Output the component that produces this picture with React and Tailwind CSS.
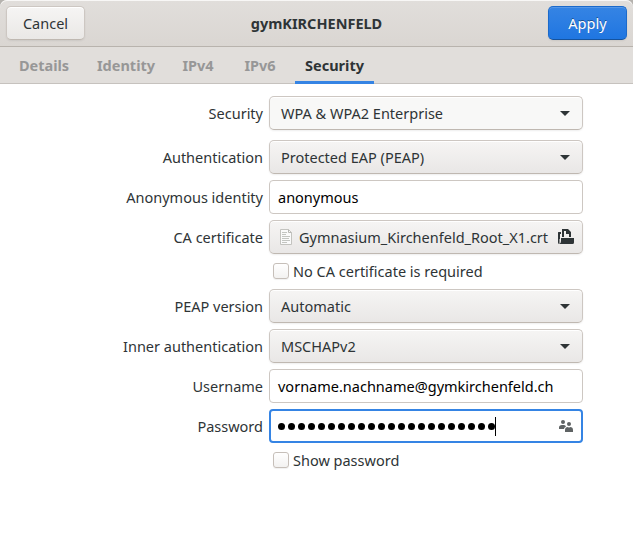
import React from 'react';

const raised =
  'border border-[#cdc7c2] border-b-[#bfb8b1] rounded-[5px] shadow-[inset_0_1px_#ffffff,0_1px_2px_rgba(0,0,0,0.07)]';

function Row({ label, labelClass = '', className = '', children }) {
  return (
    <div className={`flex h-[34px] items-center ${className}`}>
      <div className="w-[263px] shrink-0 text-right">
        <span className={labelClass}>{label}</span>
      </div>
      <div className="ml-[6px] h-[34px] w-[314px]">{children}</div>
    </div>
  );
}

function Combo({ text, flat, textClass = '' }) {
  return (
    <div
      className={`flex h-full items-center justify-between pl-[11px] pr-[12px] ${raised} ${
        flat ? 'bg-[#f8f8f7]' : 'bg-linear-to-b from-[#f6f5f4] to-[#e9e7e6]'
      }`}
    >
      <span className={textClass}>{text}</span>
      <svg width="10" height="5" viewBox="0 0 10 5" className="mt-px">
        <path d="M0 0h10L5 5z" fill="#2e3436" />
      </svg>
    </div>
  );
}

function Check({ label, className = '', textClass = '' }) {
  return (
    <div className={`flex h-[16px] items-center pl-[273px] ${className}`}>
      <span className="h-[16px] w-[16px] rounded-[3px] border border-[#c6bfb9] bg-linear-to-b from-white to-[#f3f2f1] shadow-[0_1px_1px_rgba(0,0,0,0.06)]" />
      <span className={`ml-[4px] ${textClass}`}>{label}</span>
    </div>
  );
}

function Tab({ label, active, className = '', textClass = '' }) {
  return (
    <div
      className={`flex h-[37px] items-center justify-center pb-px ${
        active ? 'border-b-[3px] border-[#3584e4] pt-[2px] text-[#2e3436]' : 'text-[#979797]'
      } ${className}`}
    >
      <span className={textClass}>{label}</span>
    </div>
  );
}

export default function App() {
  return (
    <div className="h-[554px] w-[633px] overflow-hidden bg-white font-['Noto_Sans',sans-serif] text-[14.5px] leading-[20px] whitespace-nowrap text-[#2e3436]">
      <div className="bg-[#b5b2ae]">
        <header className="flex h-[47px] items-start justify-between rounded-t-[7px] border-b border-[#b8b3ad] bg-linear-to-b from-[#e1dedb] to-[#dad6d2] px-[6px] pt-[6px] shadow-[inset_0_1px_#f8f7f6]">
          <button className={`h-[34px] w-[79px] bg-linear-to-b from-[#f6f5f4] to-[#eae8e6] ${raised}`}>
            <span>Cancel</span>
          </button>
          <h1 className="flex h-[34px] items-center font-bold">
            <span>gymKIRCHENFELD</span>
          </h1>
          <button className="h-[34px] w-[79px] rounded-[5px] border border-[#1b6acb] border-b-[#15539e] bg-linear-to-b from-[#3584e4] to-[#1f76e1] text-white shadow-[inset_0_1px_#5597e8,0_1px_2px_rgba(0,0,0,0.07)] [text-shadow:0_-1px_rgba(0,0,0,0.4)]">
            <span>Apply</span>
          </button>
        </header>
      </div>
      <nav className="flex h-[37px] bg-[#e1dedb] pl-[8px] font-bold shadow-[inset_0_-1px_#c6c2be]">
        <Tab label="Details" className="w-[72px]" />
        <Tab label="Identity" className="ml-[8px] w-[76px]" />
        <Tab label="IPv4" className="ml-[7px] w-[54px]" />
        <Tab label="IPv6" className="ml-[8px] w-[54px]" />
        <Tab label="Security" active className="ml-[8px] w-[79px]" />
      </nav>
      <main className="pt-[12px]">
        <Row label="Security">
          <Combo text="WPA & WPA2 Enterprise" flat />
        </Row>
        <Row label="Authentication" className="mt-[10px]">
          <Combo text="Protected EAP (PEAP)" />
        </Row>
        <Row label="Anonymous identity" className="mt-[6px]">
          <div className="flex h-full items-center rounded-[4px] border border-[#cdc7c2] bg-white pl-[8px] text-black">
            <span>anonymous</span>
          </div>
        </Row>
        <Row label="CA certificate" className="mt-[6px]">
          <div className={`flex h-full items-center bg-linear-to-b from-[#f6f5f4] to-[#e9e7e6] pl-[8px] pr-[8px] ${raised}`}>
            <svg width="16" height="16" viewBox="0 0 16 16" className="shrink-0">
              <path d="M2.5 .5h8l3 3v12h-11z" fill="#fafafa" stroke="#c3c3bf" />
              <path d="M10.5.5v3h3" fill="none" stroke="#b8b8b4" />
              <path d="M4 3.5h5M4 5.5h4M4 7.5h8M4 9.5h7M4 11.5h8M4 13.5h5" stroke="#c3c5c1" />
            </svg>
            <span className="ml-[5px] flex-1">Gymnasium_Kirchenfeld_Root_X1.crt</span>
            <svg width="16" height="16" viewBox="0 0 16 16" className="shrink-0">
              <path d="M0 3.5Q0 3 .5 3H3v2H2v5H1.500V15H1.500Q0 15 0 13.500z" fill="#2e3436" />
              <path d="M4 8V0h6l3 3v5h-2V5H8V2H6v6z" fill="#2e3436" />
              <path d="M3 9h13v4.500Q16 15 14.500 15H1.500Q3 14 3 12z" fill="#2e3436" />
            </svg>
          </div>
        </Row>
        <Check label="No CA certificate is required" className="mt-[9px]" />
        <Row label="PEAP version" className="mt-[10px]">
          <Combo text="Automatic" />
        </Row>
        <Row label="Inner authentication" className="mt-[6px]">
          <Combo text="MSCHAPv2" />
        </Row>
        <Row label="Username" className="mt-[6px]">
          <div className="flex h-full items-center rounded-[4px] border border-[#cdc7c2] bg-white pl-[8px] text-black">
            <span>vorname.nachname@gymkirchenfeld.ch</span>
          </div>
        </Row>
        <Row label="Password" className="mt-[6px]">
          <div className="flex h-full items-center rounded-[4px] border-2 border-[#3584e4] bg-white pl-[7px] pr-[7px]">
            <div className="flex gap-[3px] pt-[0px]">
              {Array.from({ length: 22 }, (_, i) => (
                <span key={i} className="h-[7px] w-[7px] rounded-full bg-black" />
              ))}
            </div>
            <span className="h-[19px] w-px bg-black" />
            <svg width="16" height="16" viewBox="0 0 16 16" className="ml-auto" fill="#5f6364">
              <circle cx="5" cy="4" r="2" />
              <path d="M1 11V9.500Q1 7 4 7h2Q7.500 7 8 8.500Q6 9.500 6 11z" />
              <circle cx="11" cy="6" r="2" />
              <path d="M7 14v-2Q7 9 10 9q1 1 2 0 3 0 3 3v2z" />
            </svg>
          </div>
        </Row>
        <Check label="Show password" className="mt-[9px]" />
      </main>
    </div>
  );
}
